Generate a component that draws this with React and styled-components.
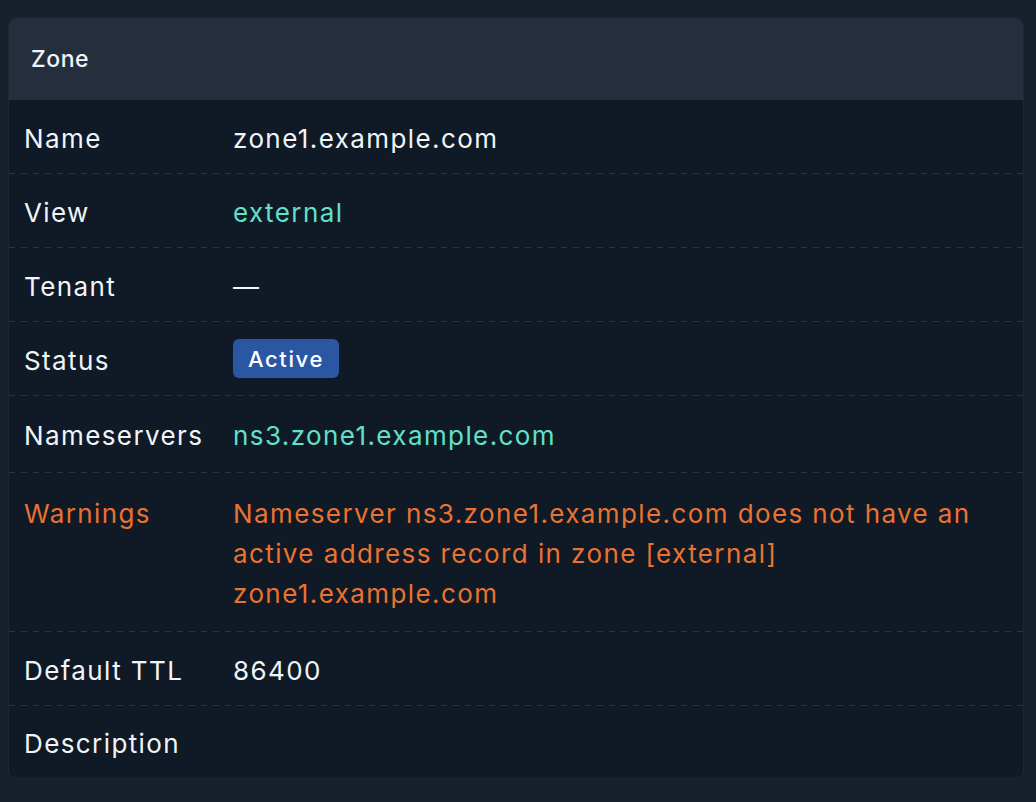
import React from 'react';
import styled, { createGlobalStyle } from 'styled-components';

const GlobalStyle = createGlobalStyle`
  body {
    margin: 0;
    background: #18202b;
    font-family: Inter, "Noto Sans", sans-serif;
  }
`;

const Page = styled.div`
  padding: 17px 12px 24px 8px;
`;

const Card = styled.div`
  background: #0f1a26;
  border: 1px solid #1d2735;
  border-radius: 9px;
  overflow: hidden;
`;

const Header = styled.div`
  background: #252e3d;
  height: 82px;
  display: flex;
  align-items: center;
  padding: 0 22px;
  color: #f1f4f8;
  font-size: 23px;
  font-weight: 500;
  letter-spacing: 0.5px;
`;

const Row = styled.div`
  display: grid;
  grid-template-columns: 209px 1fr;
  align-items: ${(p) => (p.$top ? 'start' : 'center')};
  min-height: ${(p) => p.$height || 73}px;
  padding: ${(p) => (p.$top ? '21px' : '3px')} 16px 0 15px;
  box-sizing: border-box;
  background-image: ${(p) =>
    p.$last ? 'none' : 'linear-gradient(to right, #283446 50%, transparent 50%)'};
  background-size: 12px 1px;
  background-repeat: repeat-x;
  background-position: left bottom;
  font-size: 26px;
  line-height: 40px;
  letter-spacing: 1.4px;
`;

const Label = styled.div`
  color: ${(p) => (p.$warn ? '#e8722f' : '#f1f4f8')};
`;

const Value = styled.div`
  color: ${(p) => p.$color || '#f1f4f8'};
`;

const Badge = styled.span`
  display: inline-flex;
  align-items: center;
  height: 39px;
  padding: 0 15px;
  margin-top: -7px;
  border-radius: 6px;
  background: #2a56a4;
  color: #ffffff;
  font-size: 22px;
  font-weight: 500;
  letter-spacing: 1.6px;
  vertical-align: middle;
`;

const TEAL = '#62e0c9';
const ORANGE = '#ea7330';

export default function App() {
  return (
    <>
      <GlobalStyle />
      <Page>
        <Card>
          <Header>Zone</Header>
          <Row $height={74}>
            <Label>Name</Label>
            <Value>zone1.example.com</Value>
          </Row>
          <Row $height={74}>
            <Label>View</Label>
            <Value $color={TEAL}>external</Value>
          </Row>
          <Row $height={74}>
            <Label>Tenant</Label>
            <Value>—</Value>
          </Row>
          <Row $height={74}>
            <Label>Status</Label>
            <Value>
              <Badge>Active</Badge>
            </Value>
          </Row>
          <Row $height={77}>
            <Label>Nameservers</Label>
            <Value $color={TEAL}>ns3.zone1.example.com</Value>
          </Row>
          <Row $top $height={159}>
            <Label $warn>Warnings</Label>
            <Value $color={ORANGE}>
              Nameserver ns3.zone1.example.com does not have an active address record in zone
              [external] zone1.example.com
            </Value>
          </Row>
          <Row $height={74}>
            <Label>Default TTL</Label>
            <Value>86400</Value>
          </Row>
          <Row $last $height={72}>
            <Label>Description</Label>
            <Value></Value>
          </Row>
        </Card>
      </Page>
    </>
  );
}
